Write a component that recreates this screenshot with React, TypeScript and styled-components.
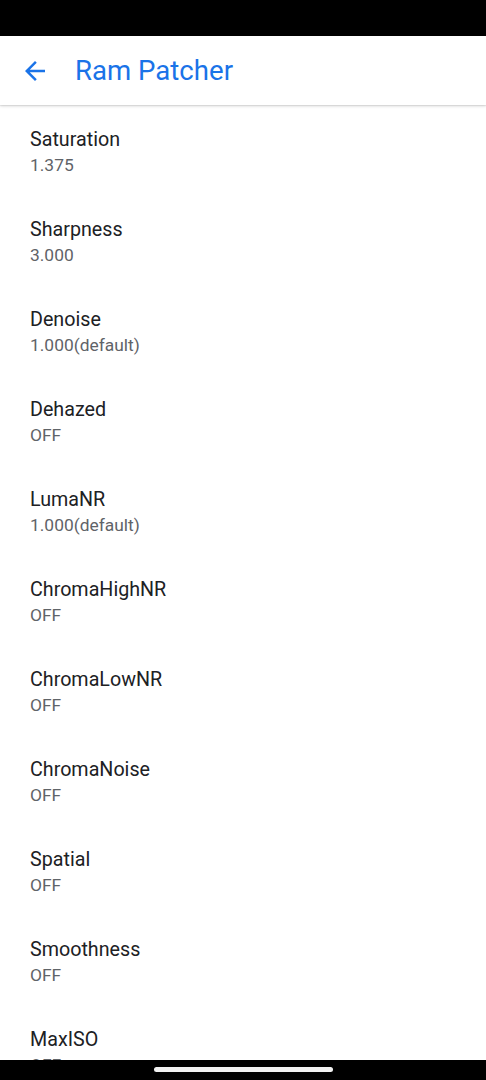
import React from "react";
import styled, { createGlobalStyle } from "styled-components";

const GlobalStyle = createGlobalStyle`
  html, body { margin: 0; padding: 0; background: #fff; }
  body { font-family: Roboto, "Noto Sans", sans-serif; -webkit-font-smoothing: antialiased; }
  * { box-sizing: border-box; }
`;

const Screen = styled.div`
  width: 486px;
  height: 1080px;
  display: flex;
  flex-direction: column;
  overflow: hidden;
  background: #fff;
`;

const StatusBar = styled.div`
  height: 36px;
  flex: none;
  background: #000;
`;

const AppBar = styled.header`
  height: 69px;
  flex: none;
  display: flex;
  align-items: center;
  background: #fff;
  position: relative;
  z-index: 2;
  box-shadow: 0 1px 3px rgba(0, 0, 0, 0.16), 0 1px 1px rgba(0, 0, 0, 0.06);
`;

const BackButton = styled.button`
  width: 30px;
  height: 30px;
  margin-left: 20px;
  padding: 0;
  border: 0;
  background: none;
  display: flex;
  align-items: center;
  justify-content: center;
  color: #1a73e8;
`;

const Title = styled.h1`
  margin: 0 0 0 25px;
  font-family: Roboto, sans-serif;
  font-weight: 400;
  font-size: 27.6px;
  color: #1a73e8;
  letter-spacing: 0;
  line-height: 32px;
`;

const List = styled.div`
  flex: 1;
  overflow: hidden;
  display: flex;
  flex-direction: column;
`;

const Row = styled.div`
  height: 90px;
  flex: none;
  padding: 21px 30px 0;
  display: flex;
  flex-direction: column;
`;

const RowTitle = styled.div`
  font-size: 19.7px;
  line-height: 28px;
  color: #202124;
`;

const RowValue = styled.div`
  font-size: 17.4px;
  line-height: 22px;
  color: #5f6368;
`;

const NavBar = styled.div`
  height: 20px;
  flex: none;
  background: #000;
  display: flex;
  justify-content: center;
  padding-top: 7px;
`;

const Handle = styled.div`
  width: 179px;
  height: 5px;
  border-radius: 3px;
  background: #f2f2f2;
`;

const items: [string, string][] = [
  ["Saturation", "1.375"],
  ["Sharpness", "3.000"],
  ["Denoise", "1.000(default)"],
  ["Dehazed", "OFF"],
  ["LumaNR", "1.000(default)"],
  ["ChromaHighNR", "OFF"],
  ["ChromaLowNR", "OFF"],
  ["ChromaNoise", "OFF"],
  ["Spatial", "OFF"],
  ["Smoothness", "OFF"],
  ["MaxISO", "OFF"],
];

export default function App() {
  return (
    <>
      <GlobalStyle />
      <Screen>
        <StatusBar />
        <AppBar>
          <BackButton aria-label="Back">
            <svg width="30" height="30" viewBox="0 0 24 24" fill="currentColor">
              <path d="M20 11H7.83l5.59-5.59L12 4l-8 8 8 8 1.41-1.41L7.83 13H20v-2z" />
            </svg>
          </BackButton>
          <Title>Ram Patcher</Title>
        </AppBar>
        <List>
          {items.map(([t, v]) => (
            <Row key={t}>
              <RowTitle>{t}</RowTitle>
              <RowValue>{v}</RowValue>
            </Row>
          ))}
        </List>
        <NavBar>
          <Handle />
        </NavBar>
      </Screen>
    </>
  );
}
